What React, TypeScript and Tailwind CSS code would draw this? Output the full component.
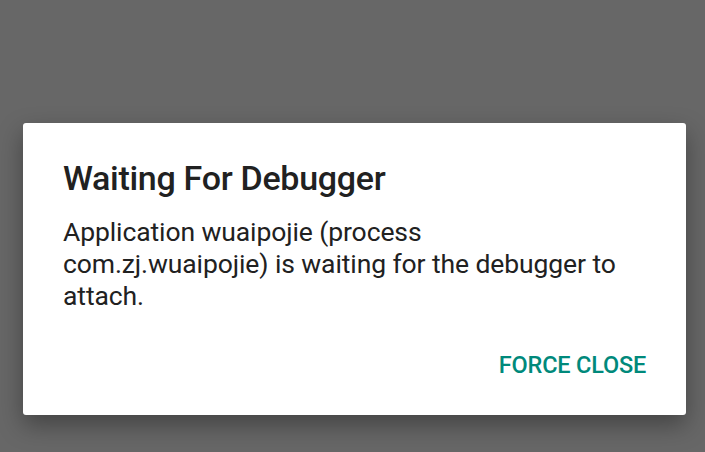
import React from 'react';

const App: React.FC = () => {
  return (
    <div
      className="w-[705px] h-[452px] bg-[#676767] overflow-hidden pt-[123px] pl-[23px]"
      style={{ fontFamily: 'Roboto, "Noto Sans", sans-serif' }}
    >
      <div className="w-[663px] h-[292px] bg-white rounded-[3px] shadow-[0_10px_24px_rgba(0,0,0,0.35)] flex flex-col pl-[40px] pr-[40px] pt-[35px]">
        <h1 className="text-[34px] leading-[40px] font-medium text-[#212121] tracking-[-0.3px]">
          Waiting For Debugger
        </h1>
        <p className="mt-[18px] w-[560px] text-[26.5px] leading-[32px] text-[#212121] tracking-[-0.1px]">
          Application wuaipojie (process com.zj.wuaipojie) is waiting for the debugger to attach.
        </p>
        <div className="flex justify-end mt-[39px]">
          <button className="text-[23.5px] leading-[28px] font-medium text-[#00897b] tracking-[-0.2px]">
            FORCE CLOSE
          </button>
        </div>
      </div>
    </div>
  );
};

export default App;
